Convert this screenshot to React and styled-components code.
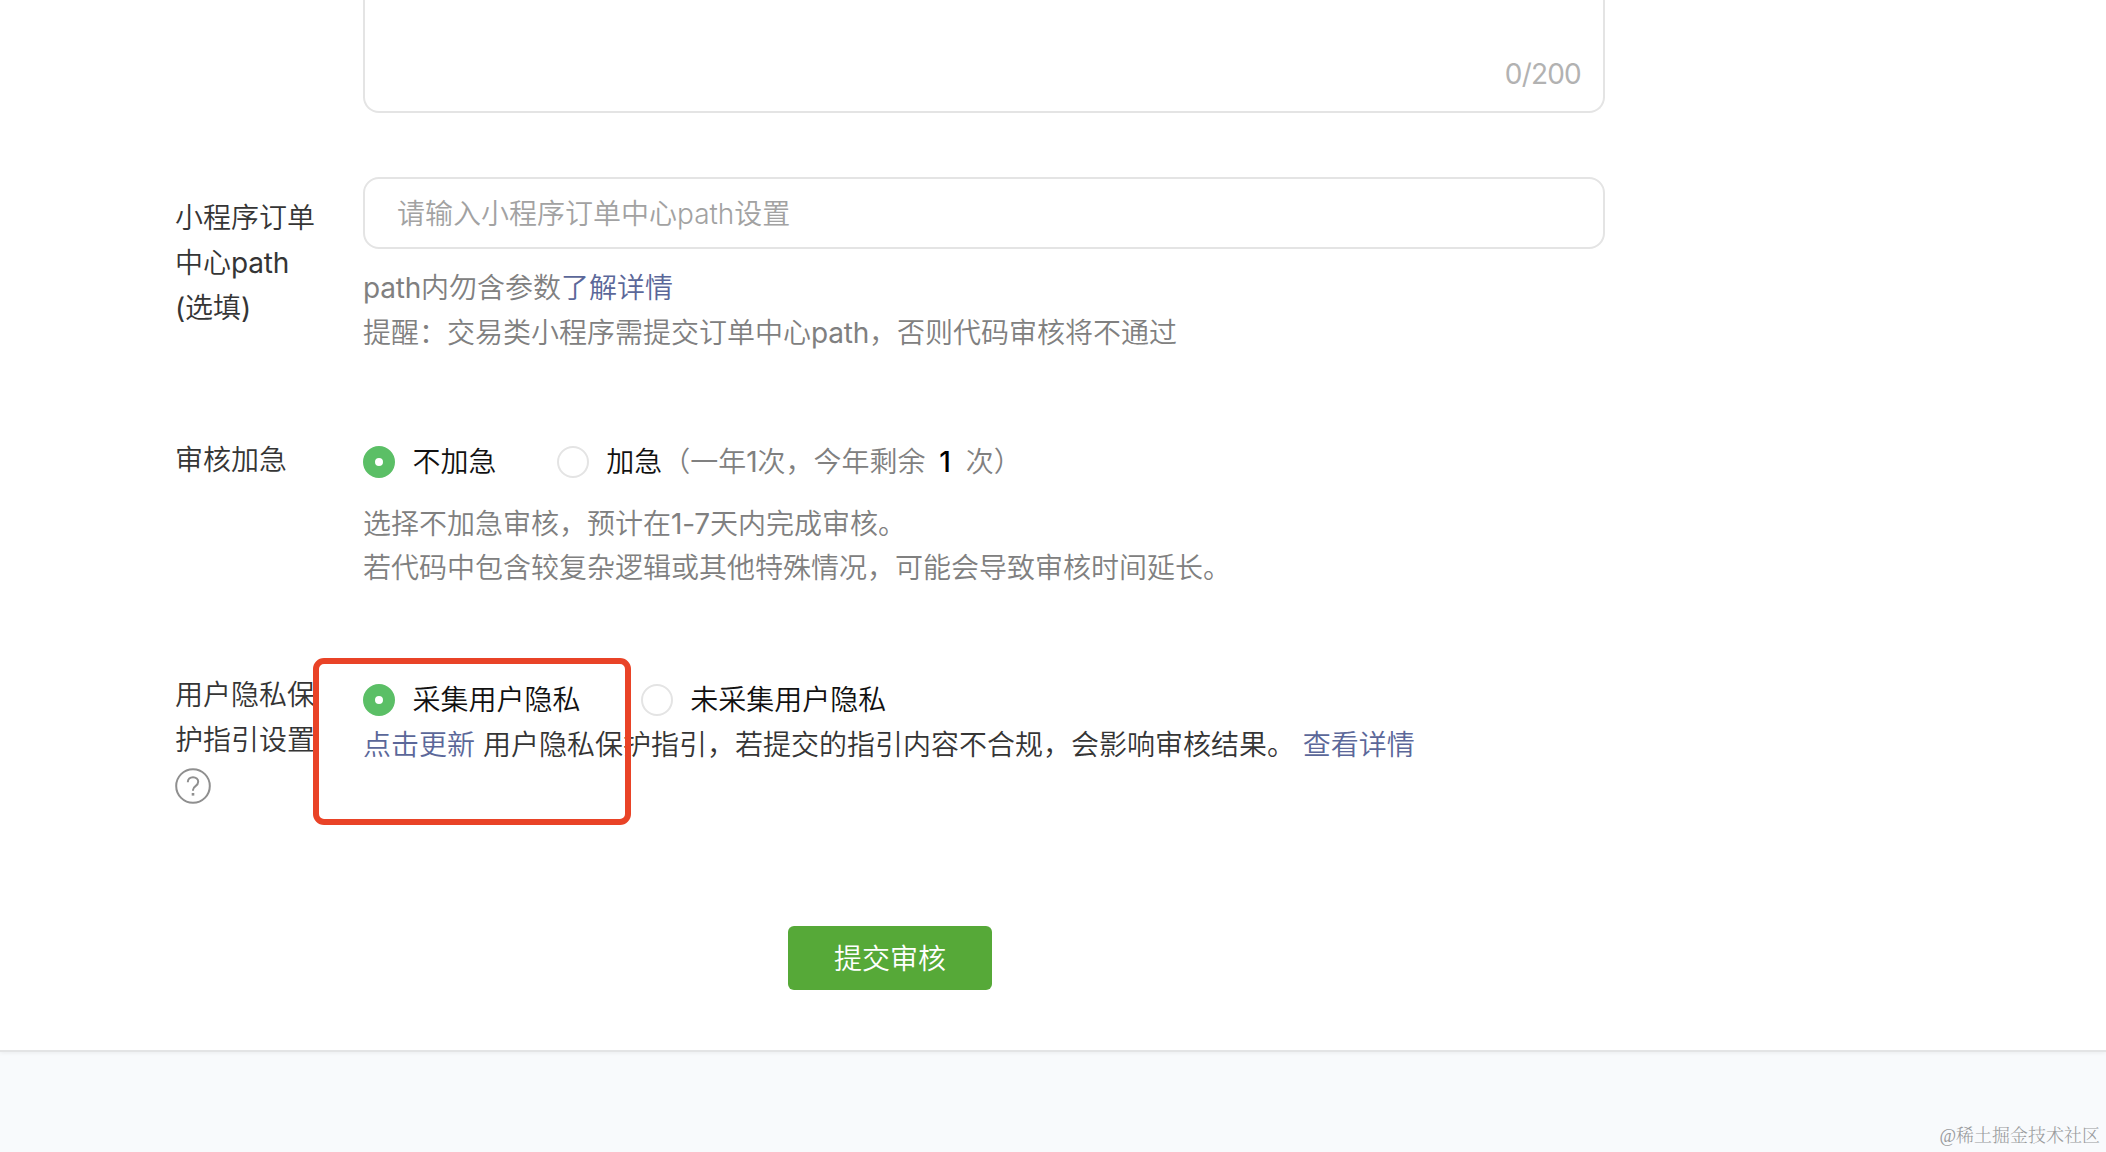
import React from "react";
import styled, { createGlobalStyle } from 'styled-components';

export default class App extends React.Component {
    constructor(props) {
        super(props);

        this.state = {
            path: '',
            urgent: 'no',
            privacy: 'collect'
        };
    }

    render() {
        const {path, urgent, privacy} = this.state;

        return (
            <Page lang="zh-CN">
                <GlobalStyle />
                <Panel>
                    <TextArea>
                        <Counter>0/200</Counter>
                    </TextArea>

                    <PathRow>
                        <Label>小程序订单<br />中心<Latin>path</Latin><br /><Latin>(</Latin>选填<Latin>)</Latin></Label>
                        <Content>
                            <InputBox>
                                <PathInput
                                    value={path}
                                    placeholder="请输入小程序订单中心path设置"
                                    onChange={e => this.setState({path: e.target.value})}
                                />
                            </InputBox>
                            <PathHint>
                                <Latin>path</Latin>内勿含参数<Link>了解详情</Link><br />
                                提醒：交易类小程序需提交订单中心<Latin>path</Latin>，否则代码审核将不通过
                            </PathHint>
                        </Content>
                    </PathRow>

                    <UrgentRow>
                        <Label>审核加急</Label>
                        <Content>
                            <Options>
                                <Option onClick={() => this.setState({urgent: 'no'})}>
                                    <Radio $checked={urgent === 'no'} />不加急
                                </Option>
                                <Option onClick={() => this.setState({urgent: 'yes'})}>
                                    <Radio $checked={urgent === 'yes'} />
                                    <span>加急<Quota>（一年<Latin>1</Latin>次，今年剩余 <Remain>1</Remain> 次）</Quota></span>
                                </Option>
                            </Options>
                            <UrgentHint>
                                选择不加急审核，预计在<Latin>1-7</Latin>天内完成审核。<br />
                                若代码中包含较复杂逻辑或其他特殊情况，可能会导致审核时间延长。
                            </UrgentHint>
                        </Content>
                    </UrgentRow>

                    <PrivacyRow>
                        <Label>
                            用户隐私保护指引设置
                            <HelpIcon viewBox="0 0 36 36">
                                <circle cx="18" cy="18" r="16.8" />
                                <path d="M12.8 14.2c0-3 2.2-5 5.2-5s5.2 1.9 5.2 4.6c0 2.1-1.1 3.2-2.7 4.3-1.7 1.2-2.5 2-2.5 3.9v.8" />
                                <rect x="16.7" y="25" width="2.6" height="2.6" />
                            </HelpIcon>
                        </Label>
                        <Content>
                            <Options>
                                <Option onClick={() => this.setState({privacy: 'collect'})}>
                                    <Radio $checked={privacy === 'collect'} />采集用户隐私
                                </Option>
                                <Option onClick={() => this.setState({privacy: 'none'})}>
                                    <Radio $checked={privacy === 'none'} />未采集用户隐私
                                </Option>
                            </Options>
                            <PrivacyText>
                                <Link>点击更新</Link> 用户隐私保护指引，若提交的指引内容不合规，会影响审核结果。 <Link>查看详情</Link>
                            </PrivacyText>
                        </Content>
                        <Highlight />
                    </PrivacyRow>

                    <SubmitButton>提交审核</SubmitButton>
                </Panel>
                <Footer>@稀土掘金技术社区</Footer>
            </Page>
        )
    }
}

const GlobalStyle = createGlobalStyle`
  * {
    box-sizing: border-box;
  }
  body {
    margin: 0;
    background: #f8fafc;
  }
`

const Page = styled.div`
  height: 1152px;
  display: flex;
  flex-direction: column;
  overflow: hidden;
  color: #353535;
  font-family: Inter, "Noto Sans CJK SC", sans-serif;
  font-size: 28px;
  font-weight: 350;
  line-height: 45px;
`

const Panel = styled.main`
  height: 1052px;
  flex: none;
  display: flex;
  flex-direction: column;
  padding-left: 175px;
  background: #fff;
  border-bottom: 2px solid #e3e4e5;
  box-shadow: 0 1px 4px rgba(0, 0, 0, 0.06);
`

const TextArea = styled.div`
  width: 1242px;
  height: 113px;
  flex: none;
  display: flex;
  justify-content: flex-end;
  align-items: flex-end;
  margin-left: 188px;
  padding: 0 22px 14px 0;
  border: 2px solid #e4e4e4;
  border-top: 0;
  border-radius: 0 0 16px 16px;
`

const Counter = styled.span`
  color: #b2b2b2;
  font-weight: 400;
  letter-spacing: -0.8px;
`

const Row = styled.section`
  position: relative;
  display: flex;
  gap: 48px;
`

const PathRow = styled(Row)`
  height: 260px;
  margin-top: 64px;

  > label {
    padding-top: 19px;
  }
`

const UrgentRow = styled(Row)`
  height: 235px;

  > label {
    padding-top: 1px;
  }
`

const PrivacyRow = styled(Row)`
  height: 254px;

  > label {
    padding-top: 1px;
  }

  > div {
    padding-top: 3px;
  }
`

const Label = styled.label`
  width: 140px;
  flex: none;
`

const Content = styled.div`
  width: 1242px;
`

const Latin = styled.span`
  font-weight: 400;
  letter-spacing: -0.2px;
`

const InputBox = styled.div`
  height: 72px;
  display: flex;
  align-items: center;
  padding: 2px 32px 0;
  border: 2px solid #e4e4e4;
  border-radius: 16px;
`

const PathInput = styled.input`
  width: 100%;
  padding: 0;
  border: 0;
  outline: 0;
  background: transparent;
  font: inherit;

  &::placeholder {
    color: #a2a2a2;
  }
`

const Hint = styled.p`
  margin: 0;
  color: #808080;
`

const PathHint = styled(Hint)`
  padding-top: 17px;
`

const UrgentHint = styled(Hint)`
  padding-top: 17px;
  line-height: 44px;
`

const Link = styled.a`
  color: #5b6799;
  cursor: pointer;
`

const Options = styled.div`
  display: flex;
  gap: 60px;
  padding-top: 1px;
`

const Option = styled.div`
  display: flex;
  align-items: center;
  gap: 17.6px;
  padding-top: 2px;
  color: #111;
  cursor: pointer;
`

const Radio = styled.span`
  width: 32px;
  height: 32px;
  flex: none;
  margin-top: -2px;
  border: ${props => props.$checked ? '12px solid #5bbf66' : '2px solid #e4e4e4'};
  border-radius: 50%;
  background: #fff;
`

const Quota = styled.span`
  color: #808080;
`

const Remain = styled.b`
  margin: 0 7px 0 6px;
  color: #000;
  font-weight: 500;
`

const PrivacyText = styled.p`
  margin: 0;
`

const HelpIcon = styled.svg`
  width: 36px;
  height: 36px;
  display: block;
  margin-top: 5px;
  fill: none;
  stroke: #8f8f8f;
  stroke-width: 2;

  rect {
    fill: #8f8f8f;
    stroke: none;
  }
`

/* red marker drawn over the privacy option */
const Highlight = styled.div`
  position: absolute;
  left: 138px;
  top: -14px;
  width: 318px;
  height: 167px;
  border: 6px solid #e94327;
  border-radius: 11px;
`

const SubmitButton = styled.button`
  width: 204px;
  height: 64px;
  margin-left: 613px;
  padding: 2px 0 0;
  border: 0;
  border-radius: 6px;
  background: #56a938;
  color: #fff;
  font: inherit;
  cursor: pointer;
`

const Footer = styled.footer`
  flex: 1;
  display: flex;
  justify-content: flex-end;
  align-items: flex-end;
  padding: 0 6px 3px 0;
  color: #999b9d;
  font-family: "Liberation Serif", "Noto Serif CJK SC", "Noto Sans CJK SC", serif;
  font-size: 18px;
  font-weight: 300;
  line-height: 26px;
`
